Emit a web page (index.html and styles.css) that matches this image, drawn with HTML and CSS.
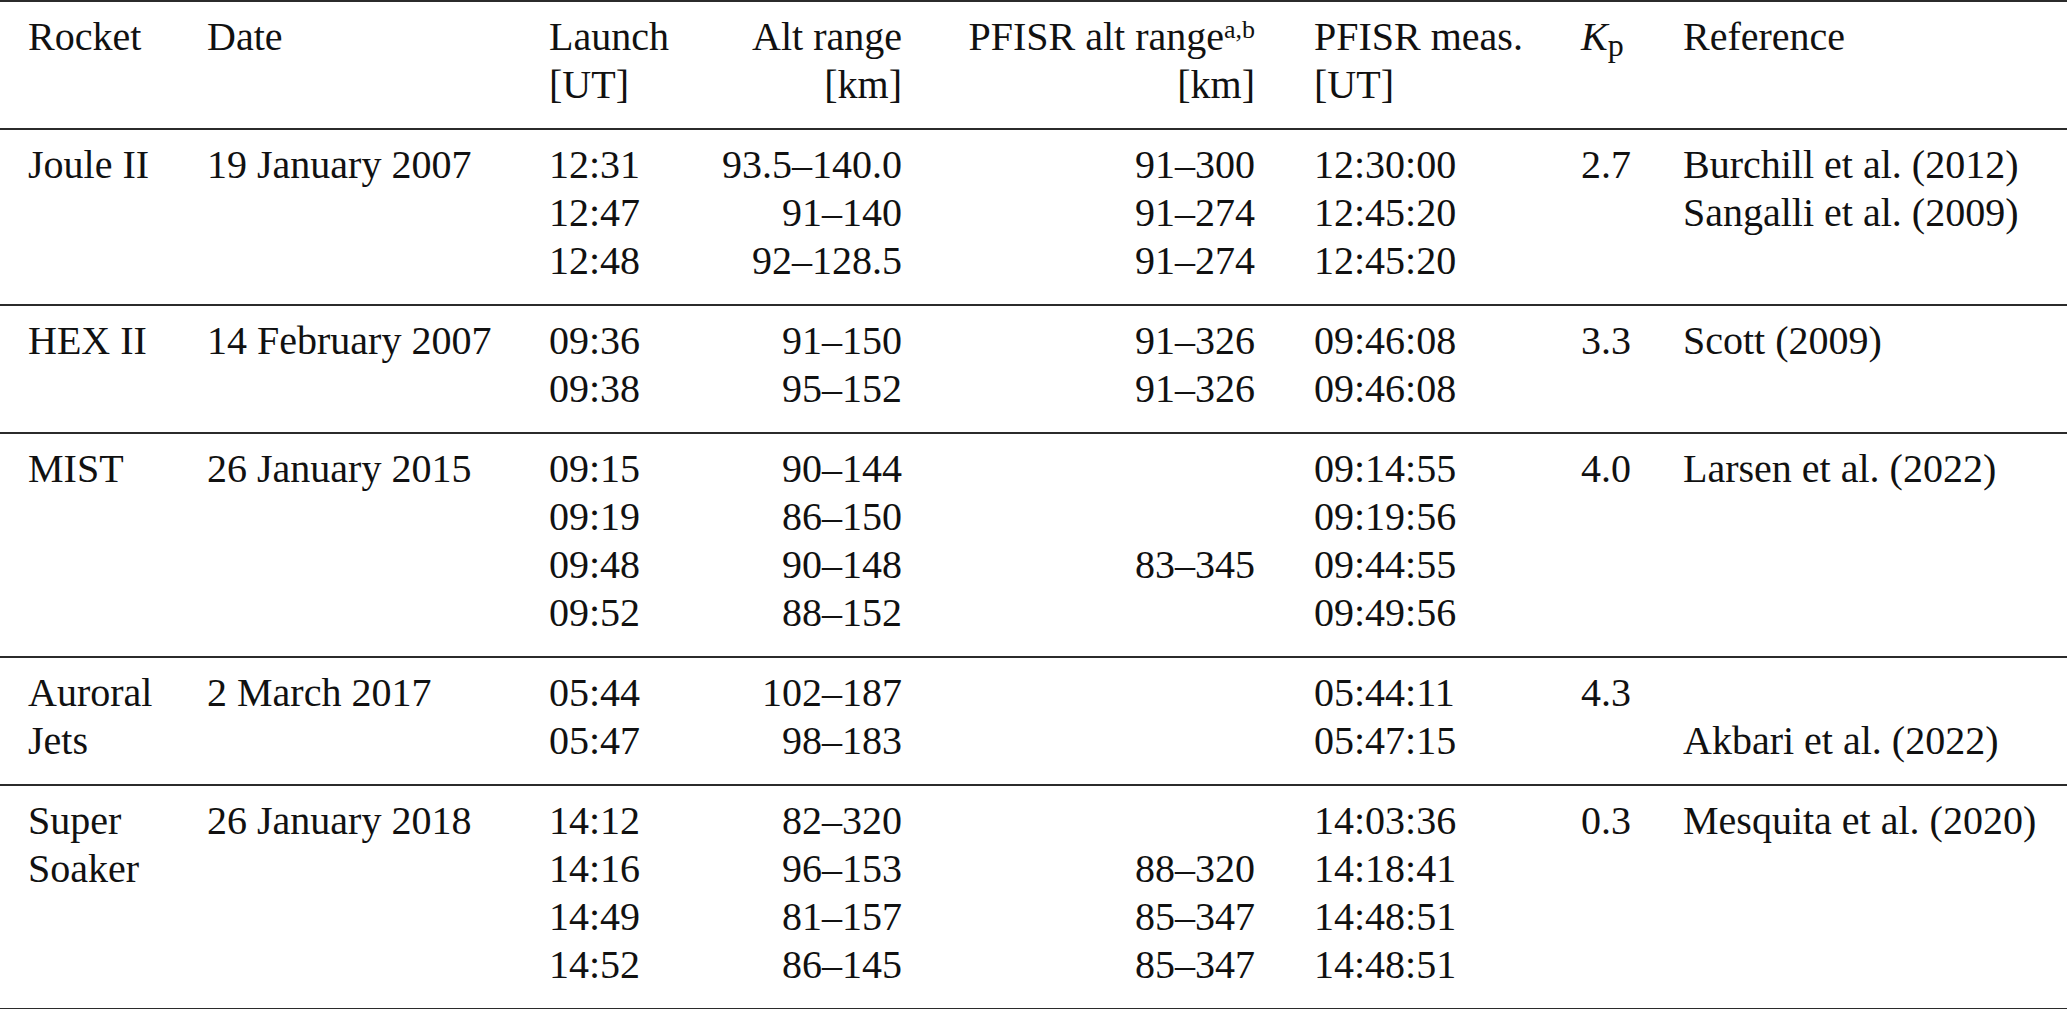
FILE: index.html
```html
<!DOCTYPE html>
<html lang="en">
<head>
<meta charset="utf-8">
<title>Rocket campaigns and PFISR measurements</title>
<link rel="stylesheet" href="styles.css">
</head>
<body>
<table class="data">
  <colgroup>
    <col class="w-rocket">
    <col class="w-date">
    <col class="w-launch">
    <col class="w-alt">
    <col class="w-pfalt">
    <col class="w-meas">
    <col class="w-kp">
    <col class="w-ref">
  </colgroup>
  <thead>
    <tr>
      <td class="c-rocket">Rocket</td>
      <td class="c-date">Date</td>
      <td class="c-launch">Launch<br>[UT]</td>
      <td class="c-alt">Alt range<br>[km]</td>
      <td class="c-pfalt">PFISR alt range<sup class="sup">a,b</sup><br>[km]</td>
      <td class="c-meas">PFISR meas.<br>[UT]</td>
      <td class="c-kp"><i>K</i><sub class="sub">p</sub></td>
      <td class="c-ref">Reference</td>
    </tr>
  </thead>
  <tbody>
    <tr>
      <td class="c-rocket">Joule II</td>
      <td class="c-date">19 January 2007</td>
      <td class="c-launch">12:31<br>12:47<br>12:48</td>
      <td class="c-alt">93.5–140.0<br>91–140<br>92–128.5</td>
      <td class="c-pfalt">91–300<br>91–274<br>91–274</td>
      <td class="c-meas">12:30:00<br>12:45:20<br>12:45:20</td>
      <td class="c-kp">2.7</td>
      <td class="c-ref">Burchill et al. (2012)<br>Sangalli et al. (2009)</td>
    </tr>
  </tbody>
  <tbody>
    <tr>
      <td class="c-rocket">HEX II</td>
      <td class="c-date">14 February 2007</td>
      <td class="c-launch">09:36<br>09:38</td>
      <td class="c-alt">91–150<br>95–152</td>
      <td class="c-pfalt">91–326<br>91–326</td>
      <td class="c-meas">09:46:08<br>09:46:08</td>
      <td class="c-kp">3.3</td>
      <td class="c-ref">Scott (2009)</td>
    </tr>
  </tbody>
  <tbody>
    <tr>
      <td class="c-rocket">MIST</td>
      <td class="c-date">26 January 2015</td>
      <td class="c-launch">09:15<br>09:19<br>09:48<br>09:52</td>
      <td class="c-alt">90–144<br>86–150<br>90–148<br>88–152</td>
      <td class="c-pfalt"><br><br>83–345</td>
      <td class="c-meas">09:14:55<br>09:19:56<br>09:44:55<br>09:49:56</td>
      <td class="c-kp">4.0</td>
      <td class="c-ref">Larsen et al. (2022)</td>
    </tr>
  </tbody>
  <tbody>
    <tr>
      <td class="c-rocket">Auroral Jets</td>
      <td class="c-date">2 March 2017</td>
      <td class="c-launch">05:44<br>05:47</td>
      <td class="c-alt">102–187<br>98–183</td>
      <td class="c-pfalt"></td>
      <td class="c-meas">05:44:11<br>05:47:15</td>
      <td class="c-kp">4.3</td>
      <td class="c-ref"><br>Akbari et al. (2022)</td>
    </tr>
  </tbody>
  <tbody class="last">
    <tr>
      <td class="c-rocket">Super Soaker</td>
      <td class="c-date">26 January 2018</td>
      <td class="c-launch">14:12<br>14:16<br>14:49<br>14:52</td>
      <td class="c-alt">82–320<br>96–153<br>81–157<br>86–145</td>
      <td class="c-pfalt"><br>88–320<br>85–347<br>85–347</td>
      <td class="c-meas">14:03:36<br>14:18:41<br>14:48:51<br>14:48:51</td>
      <td class="c-kp">0.3</td>
      <td class="c-ref">Mesquita et al. (2020)</td>
    </tr>
  </tbody>
</table>
</body>
</html>
```

FILE: styles.css
```css
html, body {
  margin: 0;
  padding: 0;
  background: #ffffff;
  overflow: hidden;
}

body {
  font-family: "Liberation Serif", "Times New Roman", serif;
  font-size: 40px;
  line-height: 48px;
  color: #111111;
}

.data {
  width: 2067px;
  table-layout: fixed;
  border-collapse: separate;
  border-spacing: 0;
}

.w-rocket { width: 207px; }
.w-date { width: 342px; }
.w-launch { width: 151px; }
.w-alt { width: 202px; }
.w-pfalt { width: 353px; }
.w-meas { width: 326px; }
.w-kp { width: 102px; }
.w-ref { width: 384px; }

.data td {
  vertical-align: top;
  padding: 11px 0 19px 0;
  border-top: 2px solid #2b2b2b;
  white-space: nowrap;
  text-align: left;
}

.data tbody.last td {
  border-bottom: 2px solid #2b2b2b;
}

.data td.c-rocket {
  padding-left: 28px;
  padding-right: 10px;
  white-space: normal;
}

.data td.c-alt,
.data td.c-pfalt {
  text-align: right;
}

.data td.c-meas {
  padding-left: 59px;
}

.sup {
  font-size: 26px;
  line-height: 0;
  vertical-align: 12px;
}

.sub {
  font-size: 32px;
  line-height: 0;
  vertical-align: -6px;
}
```
